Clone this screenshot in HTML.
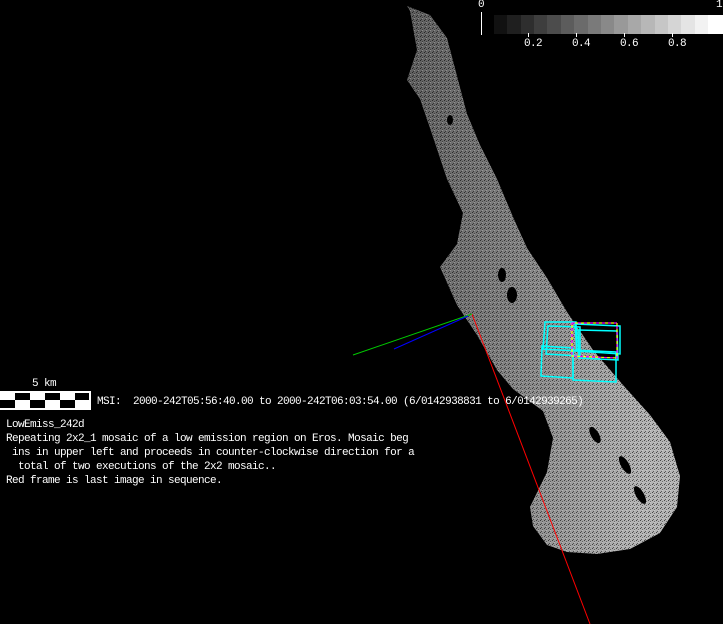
<!DOCTYPE html>
<html><head><meta charset="utf-8"><style>
html,body{margin:0;padding:0;background:#000;width:723px;height:624px;overflow:hidden}
.t{position:absolute;color:#fff;font-family:"Liberation Mono",monospace;font-size:11px;letter-spacing:-0.6px;line-height:14px;white-space:pre}
</style></head><body>
<svg width="723" height="624" style="position:absolute;left:0;top:0">
<defs>
<linearGradient id="g" x1="0" y1="0" x2="1" y2="0.2">
<stop offset="0" stop-color="#5e5e5e"/><stop offset="0.5" stop-color="#858585"/><stop offset="1" stop-color="#b5b5b5"/>
</linearGradient>
<pattern id="p" width="4" height="4" patternUnits="userSpaceOnUse">
<rect width="1" height="1" fill="#000" opacity="0.6"/><rect x="2" y="1" width="1" height="1" fill="#000" opacity="0.4"/><rect x="1" y="3" width="1" height="1" fill="#000" opacity="0.5"/><rect x="2" y="2" width="1" height="1" fill="#fff" opacity="0.25"/>
</pattern>
</defs>
<polygon fill="url(#g)" points="407,6 430,15 447,38 457,76 467,114 480,145 497,179 513,217 527,248 547,278 567,312 593,350 623,385 650,415 670,442 680,476 677,507 660,533 630,549 597,554 567,552 547,545 533,526 530,507 547,472 553,438 543,411 513,389 497,370 477,335 457,305 440,267 457,244 463,213 447,179 433,137 420,99 407,80 417,50 410,11"/>
<polygon fill="url(#p)" points="407,6 430,15 447,38 457,76 467,114 480,145 497,179 513,217 527,248 547,278 567,312 593,350 623,385 650,415 670,442 680,476 677,507 660,533 630,549 597,554 567,552 547,545 533,526 530,507 547,472 553,438 543,411 513,389 497,370 477,335 457,305 440,267 457,244 463,213 447,179 433,137 420,99 407,80 417,50 410,11"/>
<g fill="#000">
<ellipse cx="502" cy="275" rx="4" ry="7"/><ellipse cx="512" cy="295" rx="5" ry="8"/>
<ellipse cx="595" cy="435" rx="4" ry="9" transform="rotate(-30 595 435)"/>
<ellipse cx="625" cy="465" rx="4" ry="10" transform="rotate(-30 625 465)"/>
<ellipse cx="640" cy="495" rx="4" ry="10" transform="rotate(-30 640 495)"/>
<ellipse cx="450" cy="120" rx="3" ry="5"/>
</g>
<line x1="472" y1="314" x2="590" y2="624" stroke="#f00" stroke-width="1"/>
<line x1="472" y1="314" x2="353" y2="355" stroke="#0c0" stroke-width="1"/>
<line x1="468" y1="316" x2="394" y2="349" stroke="#00f" stroke-width="1"/>
<g fill="none" stroke="#0ff" stroke-width="1.5">
<polygon points="545,322 576,322 577,351 543,349"/>
<polygon points="575,324 620,326 620,354 577,351"/>
<polygon points="542,346 573,348 573,378 541,376"/>
<polygon points="573,350 616,352 616,382 573,380"/>
<polygon points="548,326 580,327 580,356 546,354"/>
<polygon points="578,330 617,331 618,360 579,358"/>
</g>
<polygon points="572,323 617,323 617,358 572,356" fill="none" stroke="#f0f" stroke-width="1.2" stroke-dasharray="3,3"/>
<polygon points="572,323 617,323 617,358 572,356" fill="none" stroke="#ff0" stroke-width="1.2" stroke-dasharray="3,3" stroke-dashoffset="3"/>
<g>
<rect x="494" y="15" width="14" height="19" fill="#111"/><rect x="507" y="15" width="14" height="19" fill="#1f1f1f"/>
<rect x="521" y="15" width="14" height="19" fill="#2e2e2e"/><rect x="534" y="15" width="14" height="19" fill="#3e3e3e"/>
<rect x="547" y="15" width="14" height="19" fill="#4c4c4c"/><rect x="561" y="15" width="14" height="19" fill="#5c5c5c"/>
<rect x="574" y="15" width="14" height="19" fill="#6b6b6b"/><rect x="588" y="15" width="14" height="19" fill="#7a7a7a"/>
<rect x="601" y="15" width="14" height="19" fill="#898989"/><rect x="614" y="15" width="14" height="19" fill="#999"/>
<rect x="628" y="15" width="14" height="19" fill="#a8a8a8"/><rect x="641" y="15" width="14" height="19" fill="#b7b7b7"/>
<rect x="655" y="15" width="14" height="19" fill="#c6c6c6"/><rect x="668" y="15" width="14" height="19" fill="#d5d5d5"/>
<rect x="681" y="15" width="14" height="19" fill="#e4e4e4"/><rect x="695" y="15" width="14" height="19" fill="#f2f2f2"/>
<rect x="708" y="15" width="15" height="19" fill="#fff"/>
<line x1="481.5" y1="12" x2="481.5" y2="35" stroke="#fff"/>
<line x1="528.5" y1="33" x2="528.5" y2="37" stroke="#fff"/><line x1="576.5" y1="33" x2="576.5" y2="37" stroke="#fff"/>
<line x1="624.5" y1="33" x2="624.5" y2="37" stroke="#fff"/><line x1="672.5" y1="33" x2="672.5" y2="37" stroke="#fff"/>
</g>
<rect x="0" y="391" width="91" height="19" fill="#fff"/>
<g fill="#000">
<rect x="15" y="393" width="15" height="7"/><rect x="45" y="393" width="15" height="7"/><rect x="75" y="393" width="14" height="7"/>
<rect x="0" y="400" width="15" height="8"/><rect x="30" y="400" width="15" height="8"/><rect x="60" y="400" width="15" height="8"/>
</g>
</svg>
<div class="t" style="left:478px;top:-2px">0</div>
<div class="t" style="left:716px;top:-2px">1</div>
<div class="t" style="left:524px;top:37px">0.2</div>
<div class="t" style="left:572px;top:37px">0.4</div>
<div class="t" style="left:620px;top:37px">0.6</div>
<div class="t" style="left:668px;top:37px">0.8</div>
<div class="t" style="left:32px;top:377px">5 km</div>
<div class="t" style="left:97px;top:395px">MSI:  2000-242T05:56:40.00 to 2000-242T06:03:54.00 (6/0142938831 to 6/0142939265)</div>
<div class="t" style="left:6px;top:418px">LowEmiss_242d
Repeating 2x2_1 mosaic of a low emission region on Eros. Mosaic beg
 ins in upper left and proceeds in counter-clockwise direction for a
  total of two executions of the 2x2 mosaic..
Red frame is last image in sequence.</div>
</body></html>
